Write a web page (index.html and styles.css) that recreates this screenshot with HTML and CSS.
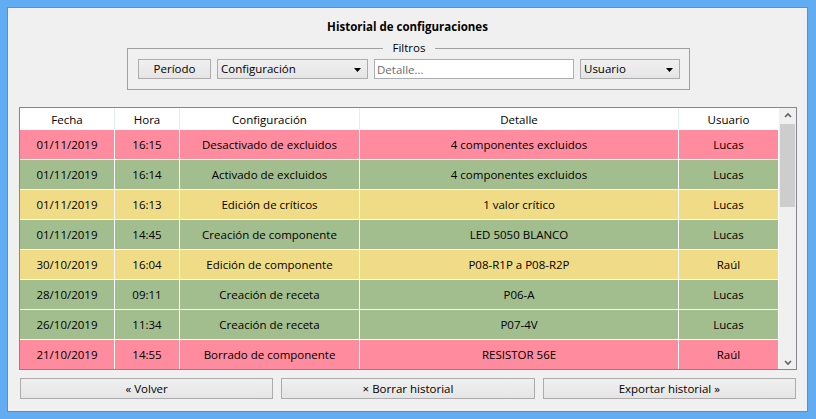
FILE: index.html
```html
<!DOCTYPE html>
<html lang="es">
<head>
<meta charset="utf-8">
<title>Historial de configuraciones</title>
<link rel="stylesheet" href="styles.css">
</head>
<body>
<div class="window">
  <div class="dialog">
    <h1 class="title">Historial de configuraciones</h1>
    <fieldset class="filters">
      <legend>Filtros</legend>
      <div class="filter-row">
        <button class="btn btn-periodo">Período</button>
        <div class="combo combo-config"><span>Configuración</span>
          <svg class="arrow" width="7" height="4" viewBox="0 0 7 4"><polygon points="0,0 7,0 3.5,4" fill="#000"/></svg>
        </div>
        <input class="detail" type="text" placeholder="Detalle…">
        <div class="combo combo-user"><span>Usuario</span>
          <svg class="arrow" width="7" height="4" viewBox="0 0 7 4"><polygon points="0,0 7,0 3.5,4" fill="#000"/></svg>
        </div>
      </div>
    </fieldset>

    <div class="table">
      <div class="grid">
        <div class="row head">
          <div class="cell">Fecha</div><div class="cell">Hora</div><div class="cell">Configuración</div><div class="cell">Detalle</div><div class="cell">Usuario</div>
        </div>
        <div class="row pink">
          <div class="cell">01/11/2019</div><div class="cell">16:15</div><div class="cell">Desactivado de excluidos</div><div class="cell">4 componentes excluidos</div><div class="cell">Lucas</div>
        </div>
        <div class="row green">
          <div class="cell">01/11/2019</div><div class="cell">16:14</div><div class="cell">Activado de excluidos</div><div class="cell">4 componentes excluidos</div><div class="cell">Lucas</div>
        </div>
        <div class="row yellow">
          <div class="cell">01/11/2019</div><div class="cell">16:13</div><div class="cell">Edición de críticos</div><div class="cell">1 valor crítico</div><div class="cell">Lucas</div>
        </div>
        <div class="row green">
          <div class="cell">01/11/2019</div><div class="cell">14:45</div><div class="cell">Creación de componente</div><div class="cell">LED 5050 BLANCO</div><div class="cell">Lucas</div>
        </div>
        <div class="row yellow">
          <div class="cell">30/10/2019</div><div class="cell">16:04</div><div class="cell">Edición de componente</div><div class="cell">P08-R1P a P08-R2P</div><div class="cell">Raúl</div>
        </div>
        <div class="row green">
          <div class="cell">28/10/2019</div><div class="cell">09:11</div><div class="cell">Creación de receta</div><div class="cell">P06-A</div><div class="cell">Lucas</div>
        </div>
        <div class="row green">
          <div class="cell">26/10/2019</div><div class="cell">11:34</div><div class="cell">Creación de receta</div><div class="cell">P07-4V</div><div class="cell">Lucas</div>
        </div>
        <div class="row pink">
          <div class="cell">21/10/2019</div><div class="cell">14:55</div><div class="cell">Borrado de componente</div><div class="cell">RESISTOR 56E</div><div class="cell">Raúl</div>
        </div>
      </div>
      <div class="scrollbar">
        <div class="sb-btn sb-up">
          <svg width="8" height="6" viewBox="0 0 8 6"><path d="M1 5 L4 2 L7 5" fill="none" stroke="#606060" stroke-width="1.6"/></svg>
        </div>
        <div class="sb-thumb"></div>
        <div class="sb-track"></div>
        <div class="sb-btn sb-down">
          <svg width="8" height="6" viewBox="0 0 8 6"><path d="M1 1 L4 4 L7 1" fill="none" stroke="#606060" stroke-width="1.6"/></svg>
        </div>
      </div>
    </div>

    <div class="actions">
      <button class="btn btn-action">« Volver</button>
      <button class="btn btn-action">× Borrar historial</button>
      <button class="btn btn-action">Exportar historial »</button>
    </div>
  </div>
</div>
</body>
</html>
```

FILE: styles.css
```css
* {
  box-sizing: border-box;
}

html, body {
  margin: 0;
  padding: 0;
}

body {
  width: 816px;
  height: 419px;
  font-family: "Open Sans", "Noto Sans", sans-serif;
  font-size: 11.5px;
  color: #000;
  background: #62acf3;
  overflow: hidden;
}

.window {
  width: 816px;
  height: 419px;
  padding: 7px 8px 7px 7px;
  background: #62acf3;
}

.dialog {
  width: 801px;
  height: 405px;
  border: 1px solid #4b93dc;
  background: #f0f0f0;
  padding: 0 10px 0 11px;
  display: flex;
  flex-direction: column;
  align-items: flex-start;
}

.title {
  align-self: stretch;
  margin: 0 -10px 0 -11px;
  height: 32px;
  padding-top: 11px;
  font-size: 11.5px;
  line-height: 16px;
  font-weight: 700;
  text-align: center;
}

.filters {
  margin: 0 0 0 108px;
  width: 563px;
  padding: 3px 9px 10px 10px;
  border: 1px solid #a0a0a0;
  min-width: 0;
}

.filters legend {
  margin: 0 auto;
  padding: 0 10px;
  font-size: 11.5px;
  line-height: 16px;
  height: 16px;
}

.filter-row {
  display: flex;
  gap: 6px;
  height: 20px;
}

.btn {
  font-family: inherit;
  font-size: 11.5px;
  color: #000;
  border: 1px solid #acacac;
  background: linear-gradient(#f0f0f0, #e5e5e5);
  padding: 0;
  margin: 0;
  height: 20px;
  line-height: 18px;
  text-align: center;
}

.btn-periodo {
  width: 73px;
}

.combo {
  height: 20px;
  border: 1px solid #acacac;
  background: linear-gradient(#f0f0f0, #e5e5e5);
  display: flex;
  align-items: center;
  justify-content: space-between;
  padding: 0 6px 0 3px;
  line-height: 18px;
}

.combo-config {
  width: 151px;
}

.combo-user {
  width: 100px;
}

.combo .arrow {
  display: block;
  margin-top: 1px;
}

.detail {
  width: 200px;
  height: 20px;
  border: 1px solid #abadb3;
  background: #fff;
  padding: 0 2px;
  margin: 0;
  font-family: inherit;
  font-size: 11.5px;
  color: #000;
  outline: none;
}

.detail::placeholder {
  color: #6d6d6d;
}

.table {
  margin-top: 17px;
  width: 778px;
  height: 263px;
  border: 1px solid #828790;
  background: #fff;
  display: flex;
}

.grid {
  width: 759px;
  height: 261px;
  overflow: hidden;
}

.row {
  display: grid;
  grid-template-columns: 95px 65px 180px 319px 100px;
  height: 30px;
  border-bottom: 1px solid #fff;
}

.cell {
  display: flex;
  align-items: center;
  justify-content: center;
  border-right: 1px solid #fff;
  white-space: nowrap;
  overflow: hidden;
}

.row.head {
  height: 22px;
  border-bottom: none;
  background: #fff;
}

.row.head .cell {
  border-right-color: #e3ecf7;
}

.row.head .cell:last-child {
  border-right-color: #fff;
}

.pink {
  background: #ff8c9e;
}

.green {
  background: #a3be8e;
}

.yellow {
  background: #f0dc86;
}

.scrollbar {
  width: 17px;
  height: 261px;
  background: #f0f0f0;
  display: flex;
  flex-direction: column;
}

.sb-btn {
  height: 16px;
  display: flex;
  align-items: center;
  justify-content: center;
  flex: none;
}

.sb-up svg {
  margin-top: -3px;
}

.sb-down {
  height: 17px;
}

.sb-down svg {
  margin-top: 5px;
}

.sb-thumb {
  flex: none;
  height: 83px;
  margin: 0 1px;
  background: #cdcdcd;
}

.sb-track {
  flex: 1;
}

.actions {
  margin-top: 8px;
  width: 778px;
  padding: 0 1px;
  display: flex;
  gap: 8px;
}

.btn-action {
  flex: 1;
  height: 21px;
  line-height: 19px;
}
```
